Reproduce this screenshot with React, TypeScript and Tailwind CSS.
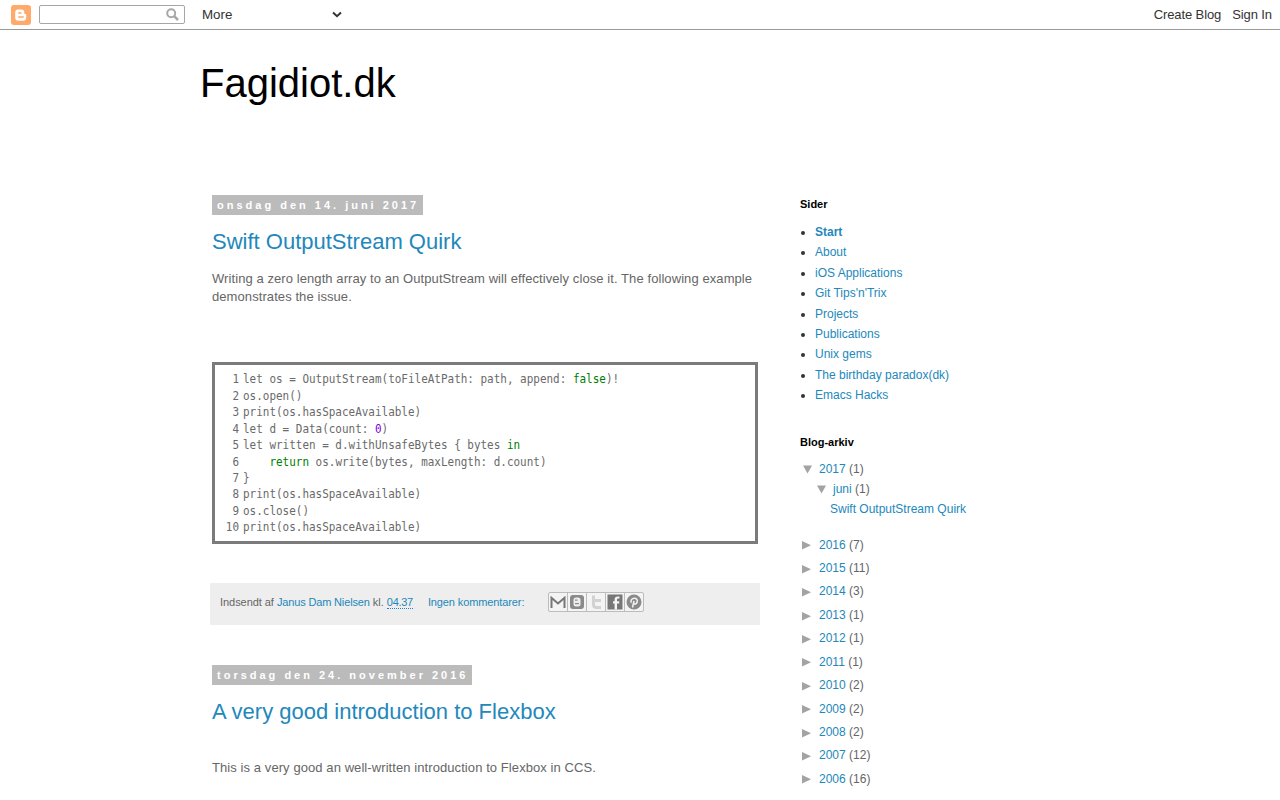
const pages = [
  'About',
  'iOS Applications',
  "Git Tips'n'Trix",
  'Projects',
  'Publications',
  'Unix gems',
  'The birthday paradox(dk)',
  'Emacs Hacks',
];

const years: [string, number][] = [
  ['2016', 7],
  ['2015', 11],
  ['2014', 3],
  ['2013', 1],
  ['2012', 1],
  ['2011', 1],
  ['2010', 2],
  ['2009', 2],
  ['2008', 2],
  ['2007', 12],
  ['2006', 16],
];

const K = ({ c }: { c: string }) => <span className="text-[#008000]">{c}</span>;

const code = [
  <>let os = OutputStream(toFileAtPath: path, append: <K c="false" />)!</>,
  <>os.open()</>,
  <>print(os.hasSpaceAvailable)</>,
  <>let d = Data(count: <span className="text-[#7a00e0]">0</span>)</>,
  <>let written = d.withUnsafeBytes {'{'} bytes <K c="in" /></>,
  <>{'    '}<K c="return" /> os.write(bytes, maxLength: d.count)</>,
  <>{'}'}</>,
  <>print(os.hasSpaceAvailable)</>,
  <>os.close()</>,
  <>print(os.hasSpaceAvailable)</>,
];

function DateHeader({ children }: { children: string }) {
  return (
    <div className="inline-block h-[20px] bg-[#bbbbbb] pl-[5px] pr-[4px] text-[11px] leading-[20px] font-bold tracking-[3px] text-white">
      {children}
    </div>
  );
}

function Arrow({ open }: { open?: boolean }) {
  return (
    <svg width="11" height="10" viewBox="0 0 11 10" className="shrink-0 fill-[#a3a3a3]">
      {open ? <path d="M1 1.500H10L5.500 9.500Z" /> : <path d="M0 1V9.500L9 5.200Z" />}
    </svg>
  );
}

function ShareButton({ children }: { children: React.ReactNode }) {
  return (
    <div className="flex h-[18px] w-[19px] items-center justify-center border-r border-[#bcbcbc] last:w-[18px] last:border-r-0">
      {children}
    </div>
  );
}

export default function App() {
  return (
    <div className="h-[800px] overflow-hidden bg-white font-['Liberation_Sans',Arial,sans-serif] text-[13px] text-[#666666]">
      {/* navbar */}
      <div className="flex h-[30px] items-center border-b border-[#999999] bg-white pr-[8px] pl-[11px]">
        <svg width="20" height="20" viewBox="0 0 20 20" className="shrink-0">
          <rect width="20" height="20" rx="3" fill="#ffa96b" />
          <path
            d="M7 4.500h3.600c1.600 0 2.700 1.100 2.700 2.600v1.200c0 .4.3.7.7.7h.3c.6 0 .9.4.9.9v2.800c0 1.800-1.300 3-3 3H7c-1.600 0-2.800-1.200-2.800-2.800V7.300C4.200 5.700 5.400 4.500 7 4.500z"
            fill="#fff"
          />
          <rect x="7" y="7.200" width="3.600" height="1.500" rx=".7" fill="#ffa96b" />
          <rect x="7" y="11.200" width="6" height="1.500" rx=".7" fill="#ffa96b" />
        </svg>
        <div className="ml-[8px] flex h-[19px] w-[146px] items-center justify-end rounded-[2px] border border-[#a6a6a6] pr-[5px]">
          <svg width="13" height="13" viewBox="0 0 13 13" className="fill-none stroke-[#a8a8a8]">
            <circle cx="5.200" cy="5.200" r="4" strokeWidth="2" />
            <path d="M8.200 8.200L12 12" strokeWidth="2.600" />
          </svg>
        </div>
        <div className="ml-[17px] flex w-[140px] items-center justify-between text-[13.33px] text-[#333333]">
          <span>More</span>
          <svg width="10" height="7" viewBox="0 0 10 7" className="fill-none stroke-[#333333] stroke-2">
            <path d="M1 1.500L5 5.200L9 1.500" />
          </svg>
        </div>
        <div className="ml-auto flex gap-[11px] text-[13px] tracking-[-0.1px] text-[#333333]">
          <span>Create Blog</span>
          <span>Sign In</span>
        </div>
      </div>

      <h1 className="mt-[28px] ml-[200px] text-[40px] leading-[50px] font-normal text-black">Fagidiot.dk</h1>

      <div className="mt-[87px] ml-[200px] flex">
        {/* main column */}
        <main className="w-[600px] px-[10px]">
          <div className="w-[550px]">
            <div className="pl-[2px]">
              <DateHeader>onsdag den 14. juni 2017</DateHeader>
            </div>
            <h2 className="mt-[13px] pl-[2px] text-[22px] leading-[28px] font-normal text-[#2288bb]">
              Swift OutputStream Quirk
            </h2>
            <p className="mt-[14px] w-[548px] pl-[2px] leading-[18.2px] tracking-[0.08px]">
              Writing a zero length array to an OutputStream will effectively close it. The following example demonstrates the issue.
            </p>

            <div className="mt-[56px] ml-[2px] flex h-[182px] w-[546px] border-[3px] border-[#7b7b7b] pt-[6px] font-['DejaVu_Sans_Mono',monospace] text-[13px] leading-[16.44px] text-[#6a6a6a]">
              <div className="w-[24px] shrink-0 origin-right scale-x-[0.843] text-right">
                {code.map((_, i) => (
                  <div key={i}>{i + 1}</div>
                ))}
              </div>
              <pre className="ml-[4px] origin-left scale-x-[0.843] font-['DejaVu_Sans_Mono',monospace]">
                {code.map((line, i) => (
                  <div key={i}>{line}</div>
                ))}
              </pre>
            </div>

            {/* post footer */}
            <div className="mt-[39px] flex h-[42px] items-center bg-[#eeeeee] pb-[4px] pl-[10px] text-[11px]">
              <span className="tracking-[-0.05px]">Indsendt af&nbsp;</span>
              <a className="tracking-[-0.15px] text-[#2288bb]">Janus Dam Nielsen</a>
              <span>&nbsp;kl.&nbsp;</span>
              <a className="border-b border-dotted border-[#2288bb] leading-[12px] tracking-[-0.3px] text-[#2288bb]">04.37</a>
              <a className="ml-[15px] tracking-[-0.11px] text-[#2288bb]">Ingen kommentarer:</a>
              <div className="ml-[24px] flex h-[20px] items-center rounded-[2px] border border-[#bcbcbc] bg-[#f4f4f4]">
                <ShareButton>
                  <svg width="16" height="12" viewBox="0 0 16 12" className="fill-none stroke-[#777777] stroke-2">
                    <path d="M1.500 12V1.800L8 7.500L14.500 1.800V12" />
                  </svg>
                </ShareButton>
                <ShareButton>
                  <svg width="16" height="16" viewBox="0 0 16 16">
                    <rect x="1" y="1" width="14" height="14" rx="3" fill="#8a8a8a" />
                    <rect x="4.500" y="3.500" width="7" height="9" rx="2.500" fill="#eeeeee" />
                    <rect x="6" y="5.500" width="2.500" height="1.200" fill="#8a8a8a" />
                    <rect x="6" y="9" width="4" height="1.200" fill="#8a8a8a" />
                  </svg>
                </ShareButton>
                <ShareButton>
                  <svg width="12" height="15" viewBox="0 0 12 15" className="fill-none stroke-[#d2d2d2] stroke-[3px]">
                    <path d="M3.500 0.500V9.500C3.500 11.500 4.500 12.500 6.500 12.500H11M3.500 5.500H11" />
                  </svg>
                </ShareButton>
                <ShareButton>
                  <svg width="16" height="16" viewBox="0 0 16 16">
                    <rect x="0.500" y="0.500" width="15" height="15" fill="#777777" />
                    <path d="M10 15.500V9.500H12.200V7.200H10V5.800C10 4.800 10.500 4.400 11.300 4.400H12.500V2.400H10.800C8.700 2.400 7.600 3.600 7.600 5.500V7.200H6V9.500H7.600V15.500Z" fill="#f4f4f4" />
                  </svg>
                </ShareButton>
                <ShareButton>
                  <svg width="16" height="16" viewBox="0 0 16 16">
                    <circle cx="8" cy="8" r="7.500" fill="#8a8a8a" />
                    <path d="M6.500 13.500L8 6.800M5.300 8.800C4.200 6.300 6 4.300 8.300 4.300C10.500 4.300 11.700 5.800 11.200 7.800C10.700 10 8.500 10.800 7.300 9.300" className="fill-none stroke-[#f4f4f4] stroke-[1.500px]" />
                  </svg>
                </ShareButton>
              </div>
            </div>

            <div className="mt-[40px] pl-[2px]">
              <DateHeader>torsdag den 24. november 2016</DateHeader>
            </div>
            <h2 className="mt-[13px] pl-[2px] text-[22px] leading-[28px] font-normal text-[#2288bb]">
              A very good introduction to Flexbox
            </h2>
            <p className="mt-[33px] pl-[2px] leading-[18.2px] tracking-[0.08px]">
              This is a very good an well-written introduction to Flexbox in CCS.
            </p>
          </div>
        </main>

        {/* sidebar */}
        <aside className="w-[280px] pt-[3px] text-[12px]">
          <h3 className="text-[11px] leading-[13px] font-bold text-black">Sider</h3>
          <ul className="mt-[11px] list-disc pl-[15px] leading-[20.4px] marker:text-[#333333]">
            <li className="font-bold text-[#2288bb]">Start</li>
            {pages.map((p) => (
              <li key={p} className="text-[#2288bb]">
                {p}
              </li>
            ))}
          </ul>

          <h3 className="mt-[30px] text-[11px] leading-[13px] font-bold text-black">Blog-arkiv</h3>
          <div className="mt-[10px] leading-[20px]">
            <div className="flex items-center pl-[2px]">
              <Arrow open />
              <a className="ml-[6px] text-[#2288bb]">2017</a>
              <span>&nbsp;(1)</span>
            </div>
            <div className="flex items-center pl-[16px]">
              <Arrow open />
              <a className="ml-[6px] text-[#2288bb]">juni</a>
              <span>&nbsp;(1)</span>
            </div>
            <a className="block pl-[30px] text-[#2288bb]">Swift OutputStream Quirk</a>
          </div>
          <div className="mt-[15px] leading-[23.4px]">
            {years.map(([y, n]) => (
              <div key={y} className="flex items-center pl-[2px]">
                <Arrow />
                <a className="ml-[6px] text-[#2288bb]">{y}</a>
                <span>&nbsp;({n})</span>
              </div>
            ))}
          </div>
        </aside>
      </div>
    </div>
  );
}
